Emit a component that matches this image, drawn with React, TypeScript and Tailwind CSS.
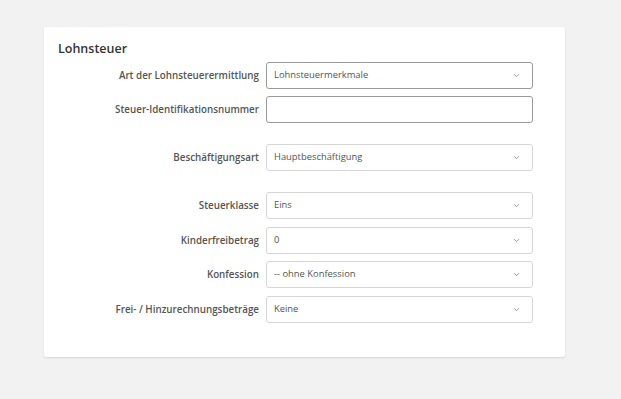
import { ChevronDown } from "lucide-react";

type Row = { label: string; value?: string; select: boolean; strong?: boolean; mt: string };

const rows: Row[] = [
  { label: "Art der Lohnsteuerermittlung", value: "Lohnsteuermerkmale", select: true, strong: true, mt: "mt-0" },
  { label: "Steuer-Identifikationsnummer", select: false, strong: true, mt: "mt-[7px]" },
  { label: "Beschäftigungsart", value: "Hauptbeschäftigung", select: true, mt: "mt-[21px]" },
  { label: "Steuerklasse", value: "Eins", select: true, mt: "mt-[21px]" },
  { label: "Kinderfreibetrag", value: "0", select: true, mt: "mt-[8px]" },
  { label: "Konfession", value: "-- ohne Konfession", select: true, mt: "mt-[7px]" },
  { label: "Frei- / Hinzurechnungsbeträge", value: "Keine", select: true, mt: "mt-[8px]" },
];

export default function App() {
  return (
    <div className="min-h-[399px] w-full bg-[#f2f2f2] pl-[44px] pt-[27px] font-['Open_Sans',sans-serif]">
      <div className="w-[521px] h-[330px] rounded-[2px] bg-white shadow-[0_1px_2px_rgba(0,0,0,0.12)] px-[14px] pt-[13px]">
        <h2 className="text-[12.5px] font-semibold text-[#333] leading-[18px]">Lohnsteuer</h2>
        <div className="mt-[4px] flex flex-col">
          {rows.map((r) => (
            <div key={r.label} className={`flex items-center gap-[7px] ${r.mt}`}>
              <label className="w-[201px] text-right text-[9.8px] font-semibold text-[#555] leading-none">{r.label}</label>
              <div
                className={`flex h-[27px] w-[267px] items-center justify-between rounded-[3px] border bg-white pl-[7px] pr-[11px] text-[9.4px] text-[#555] ${
                  r.strong ? "border-[#9a9a9a]" : "border-[#d6d6d6]"
                }`}
              >
                <span>{r.value ?? ""}</span>
                {r.select && <ChevronDown size={9} strokeWidth={2} className="text-[#777]" />}
              </div>
            </div>
          ))}
        </div>
      </div>
    </div>
  );
}
